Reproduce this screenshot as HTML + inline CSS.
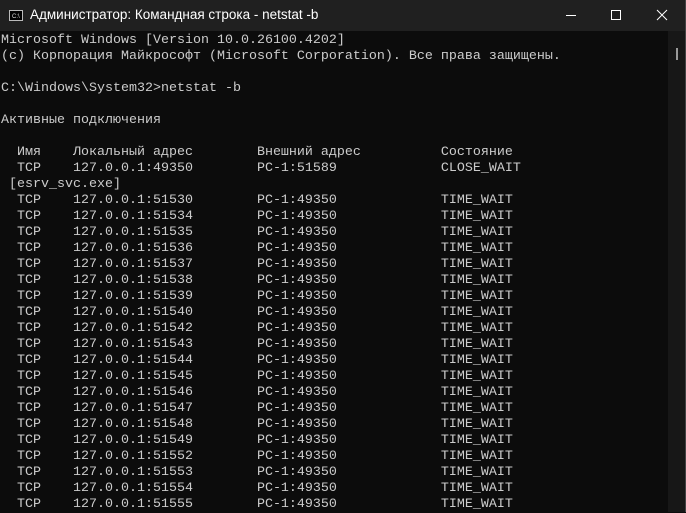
<!DOCTYPE html><html><head><style>
body{margin:0;width:686px;height:512px;overflow:hidden;background:#0c0c0c;font-family:"Liberation Mono",monospace;}
.top{position:absolute;left:0;top:0;width:686px;height:31px;background:#202020;}
.title{position:absolute;left:30px;top:7px;font:13.5px "Liberation Sans","DejaVu Sans",sans-serif;color:#fff;}
.ic{position:absolute;left:9px;top:10px;width:14px;height:11px;background:#000;border:1px solid #bbb;box-sizing:border-box;}
.ic i{position:absolute;left:2px;top:3px;font:6px sans-serif;color:#ddd;font-style:normal;}
pre{position:absolute;left:1px;top:33px;margin:0;font:13.33px/16px "Liberation Mono",monospace;color:#cccccc;}
.sb{position:absolute;left:668px;top:31px;width:17px;height:481px;background:#171717;}
.th{position:absolute;left:676px;top:48px;width:2px;height:12px;background:#999;}
.edge{position:absolute;right:0;top:0;width:1px;height:512px;background:#444;}
</style></head><body>
<div class="top"></div>
<div class="ic"><i>C:\</i></div>
<div class="title">Администратор: Командная строка - netstat  -b</div>
<svg style="position:absolute;left:560px;top:0" width="126" height="31"><path d="M6 15.5h10" stroke="#fff" stroke-width="1"/><rect x="611.5" y="10.5" width="9" height="9" transform="translate(-560 0)" fill="none" stroke="#fff"/><path d="M97 10l10 10M107 10l-10 10" stroke="#fff"/></svg>
<pre>Microsoft Windows [Version 10.0.26100.4202]
(c) Корпорация Майкрософт (Microsoft Corporation). Все права защищены.

C:\Windows\System32>netstat -b

Активные подключения

  Имя    Локальный адрес        Внешний адрес          Состояние
  TCP    127.0.0.1:49350        PC-1:51589             CLOSE_WAIT
 [esrv_svc.exe]
  TCP    127.0.0.1:51530        PC-1:49350             TIME_WAIT
  TCP    127.0.0.1:51534        PC-1:49350             TIME_WAIT
  TCP    127.0.0.1:51535        PC-1:49350             TIME_WAIT
  TCP    127.0.0.1:51536        PC-1:49350             TIME_WAIT
  TCP    127.0.0.1:51537        PC-1:49350             TIME_WAIT
  TCP    127.0.0.1:51538        PC-1:49350             TIME_WAIT
  TCP    127.0.0.1:51539        PC-1:49350             TIME_WAIT
  TCP    127.0.0.1:51540        PC-1:49350             TIME_WAIT
  TCP    127.0.0.1:51542        PC-1:49350             TIME_WAIT
  TCP    127.0.0.1:51543        PC-1:49350             TIME_WAIT
  TCP    127.0.0.1:51544        PC-1:49350             TIME_WAIT
  TCP    127.0.0.1:51545        PC-1:49350             TIME_WAIT
  TCP    127.0.0.1:51546        PC-1:49350             TIME_WAIT
  TCP    127.0.0.1:51547        PC-1:49350             TIME_WAIT
  TCP    127.0.0.1:51548        PC-1:49350             TIME_WAIT
  TCP    127.0.0.1:51549        PC-1:49350             TIME_WAIT
  TCP    127.0.0.1:51552        PC-1:49350             TIME_WAIT
  TCP    127.0.0.1:51553        PC-1:49350             TIME_WAIT
  TCP    127.0.0.1:51554        PC-1:49350             TIME_WAIT
  TCP    127.0.0.1:51555        PC-1:49350             TIME_WAIT</pre>
<div class="sb"></div><div class="th"></div><div class="edge"></div>
</body></html>
